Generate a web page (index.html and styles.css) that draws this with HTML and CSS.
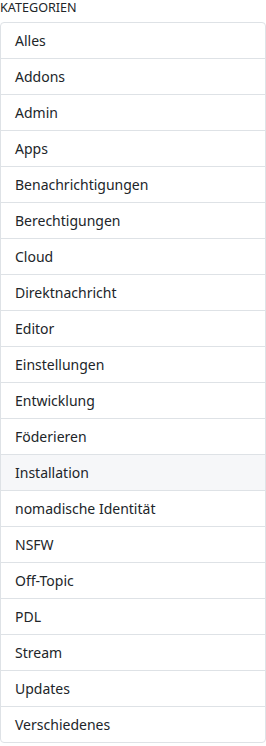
FILE: index.html
```html
<!DOCTYPE html>
<html lang="de">
<head>
<meta charset="utf-8">
<link rel="stylesheet" href="styles.css">
</head>
<body>
<div class="categories">
  <h6 class="cat-title">Kategorien</h6>
  <ul class="cat-list">
    <li class="cat-item">Alles</li>
    <li class="cat-item">Addons</li>
    <li class="cat-item">Admin</li>
    <li class="cat-item">Apps</li>
    <li class="cat-item">Benachrichtigungen</li>
    <li class="cat-item">Berechtigungen</li>
    <li class="cat-item">Cloud</li>
    <li class="cat-item">Direktnachricht</li>
    <li class="cat-item">Editor</li>
    <li class="cat-item">Einstellungen</li>
    <li class="cat-item">Entwicklung</li>
    <li class="cat-item">Föderieren</li>
    <li class="cat-item cat-item-hover">Installation</li>
    <li class="cat-item">nomadische Identität</li>
    <li class="cat-item">NSFW</li>
    <li class="cat-item">Off-Topic</li>
    <li class="cat-item">PDL</li>
    <li class="cat-item">Stream</li>
    <li class="cat-item">Updates</li>
    <li class="cat-item">Verschiedenes</li>
  </ul>
</div>
</body>
</html>
```
FILE: styles.css
```css
html, body {
  margin: 0;
  padding: 0;
  background: #ffffff;
}
body {
  font-family: "Noto Sans", "Open Sans", sans-serif;
  color: #212529;
}
.categories {
  width: 266px;
}
.cat-title {
  margin: 0;
  padding: 0;
  height: 22px;
  line-height: 16px;
  font-size: 12.6px;
  font-weight: 400;
  text-transform: uppercase;
  color: #212529;
}
.cat-list {
  list-style: none;
  margin: 0;
  padding: 0;
  border: 1px solid #dee2e6;
  border-radius: 4px;
  overflow: hidden;
}
.cat-item {
  display: flex;
  align-items: center;
  height: 35px;
  padding: 0 14px;
  font-size: 14px;
  border-bottom: 1px solid #dee2e6;
}
.cat-item:last-child {
  border-bottom: 0;
}
.cat-item-hover {
  background: #f6f7f9;
}
```
